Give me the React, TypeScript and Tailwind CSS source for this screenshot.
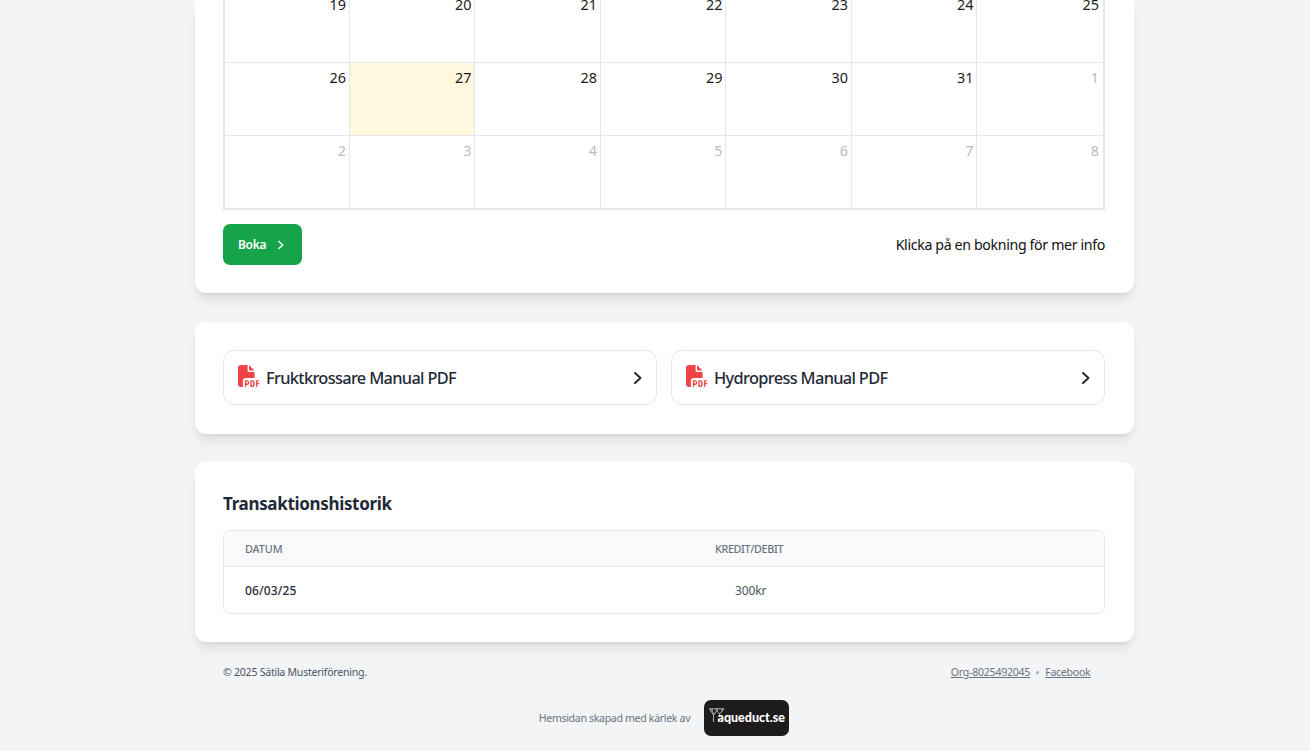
import type { ReactNode } from "react";
import { FaFilePdf } from "react-icons/fa6";

const weeks: number[][] = [
  [19, 20, 21, 22, 23, 24, 25],
  [26, 27, 28, 29, 30, 31, 1],
  [2, 3, 4, 5, 6, 7, 8],
];

const isOutside = (week: number, day: number) => week === 2 || (week === 1 && day === 1);

function Chevron({ className }: { className: string }) {
  return (
    <svg viewBox="0 0 10 14" fill="none" stroke="currentColor" strokeLinecap="round" strokeLinejoin="round" className={className}>
      <path d="M2 2l5.5 5L2 12" />
    </svg>
  );
}

function Calendar() {
  return (
    <div className="border border-t-0 border-[#e5e7eb]">
      <div className="border-r border-b border-[#e5e7eb]">
        {weeks.map((week, w) => (
          <div key={w} className={`grid grid-cols-7 pl-[0.4px] ${w === 0 ? "h-[62px]" : "h-[73px] border-t border-[#e5e7eb]"}`}>
            {week.map((day) => (
              <div
                key={day}
                className={`border-r border-[#e5e7eb] pr-[3px] text-right text-[14.4px] leading-[20px] first:border-l last:border-r-0 last:pr-[4px] ${
                  w === 0 ? "" : "pt-[5px]"
                } ${isOutside(w, day) ? "text-[#bcbcbc]" : "text-[#1c1c1c]"} ${day === 27 ? "bg-[#fff8df]" : ""}`}
              >
                <span className={w === 0 ? "-mt-[5px] block" : "block"}>{day}</span>
              </div>
            ))}
          </div>
        ))}
      </div>
    </div>
  );
}

function Card({ className, children }: { className: string; children: ReactNode }) {
  return (
    <section className={`bg-white px-[28.5px] shadow-[0_9px_13px_-3px_rgba(0,0,0,0.1),0_3px_5px_-3px_rgba(0,0,0,0.1)] ${className}`}>
      {children}
    </section>
  );
}

function ManualLink({ label }: { label: string }) {
  return (
    <a className="flex h-[55px] items-center rounded-[11px] border border-[#e5e7eb] pr-[13px] pl-[13px] text-[#1f2937]">
      <FaFilePdf className="mb-[4px] ml-[0.5px] size-[22px] text-[#ef4444]" />
      <span className="mt-px ml-[6.5px] text-[16.4px] leading-[24px] font-medium tracking-[-0.68px]">{label}</span>
      <Chevron className="ml-auto h-[14px] w-[10px] stroke-2" />
    </a>
  );
}

export default function App() {
  return (
    <div className="h-[751px] overflow-hidden bg-[#f3f4f6] font-['Noto_Sans',sans-serif]">
      <main className="ml-[194.5px] w-[939px]">
        <Card className="h-[293px] rounded-b-[11px]">
          <Calendar />
          <div className="mt-[14px] flex items-center justify-between">
            <button className="flex h-[41px] w-[79px] items-center rounded-[7px] bg-[#16a34a] pl-[15px] text-[12px] font-semibold tracking-[-0.3px] text-white">
              Boka
              <Chevron className="ml-[11px] h-[10px] w-[8px] stroke-2" />
            </button>
            <p className="text-[14.2px] tracking-[-0.36px] text-[#111111]">Klicka på en bokning för mer info</p>
          </div>
        </Card>

        <Card className="mt-[28.5px] grid h-[112px] grid-cols-2 gap-[14px] rounded-[11px] pt-[28.5px]">
          <ManualLink label="Fruktkrossare Manual PDF" />
          <ManualLink label="Hydropress Manual PDF" />
        </Card>

        <Card className="mt-[28.5px] h-[180px] rounded-[11px] pt-[29px]">
          <h2 className="text-[17px] leading-[26px] font-bold tracking-[-0.33px] text-[#1f2937]">Transaktionshistorik</h2>
          <div className="mt-[12.5px] overflow-hidden rounded-[7px] border border-[#e5e7eb]">
            <div className="flex h-[36.5px] items-center border-b border-[#e5e7eb] bg-[#f9fafb] pt-[2px] text-[10.8px] font-medium tracking-[-0.36px] text-[#6b7280]">
              <span className="w-[470px] pl-[21px] tracking-[-0.1px]">DATUM</span>
              <span className="pl-[21px]">KREDIT/DEBIT</span>
            </div>
            <div className="flex h-[45.5px] items-center pt-[2px] text-[12px]">
              <span className="w-[470px] pl-[21px] font-medium tracking-[0.15px] text-[#1f2937]">06/03/25</span>
              <span className="pl-[41px] tracking-[-0.1px] text-[#4b5563]">300kr</span>
            </div>
          </div>
        </Card>
      </main>

      <footer className="ml-[194.5px] w-[939px]">
        <div className="flex items-center justify-between pt-[21px] pr-[43px] pl-[28.5px] text-[10.6px] leading-[18px] tracking-[-0.27px] text-[#6b7280]">
          <span className="text-[#4b5563]">© 2025 Sätila Musteriförening.</span>
          <span className="flex items-center">
            <a className="underline">Org-8025492045</a>
            <span className="mx-[6px] size-[3px] rounded-full bg-[#a9adb5]" />
            <a className="underline">Facebook</a>
          </span>
        </div>
        <div className="mt-[19px] flex items-center justify-center text-[10.6px] tracking-[-0.34px] text-[#6b7280]">
          <span className="mt-[2px]">Hemsidan skapad med kärlek av</span>
          <svg viewBox="0 0 85 36" className="ml-[14px] h-[36px] w-[85px]">
            <rect width="85" height="36" rx="7" fill="#1e1b1c" />
            <path d="M5 8.8h15M5.500 9l4 6v7M14 9l-4.500 6M11.500 9l4 5v2M20 9l-4.500 5M8 9v2l2.500 3M18 9v2" fill="none" stroke="#d8d8d8" strokeWidth=".8" />
            <text x="13.500" y="22" fill="#fff" textLength="67.5" lengthAdjust="spacingAndGlyphs" fontFamily="Lato, sans-serif" fontWeight="900" fontSize="13" letterSpacing="0">
              aqueduct.se
            </text>
          </svg>
        </div>
      </footer>
    </div>
  );
}
